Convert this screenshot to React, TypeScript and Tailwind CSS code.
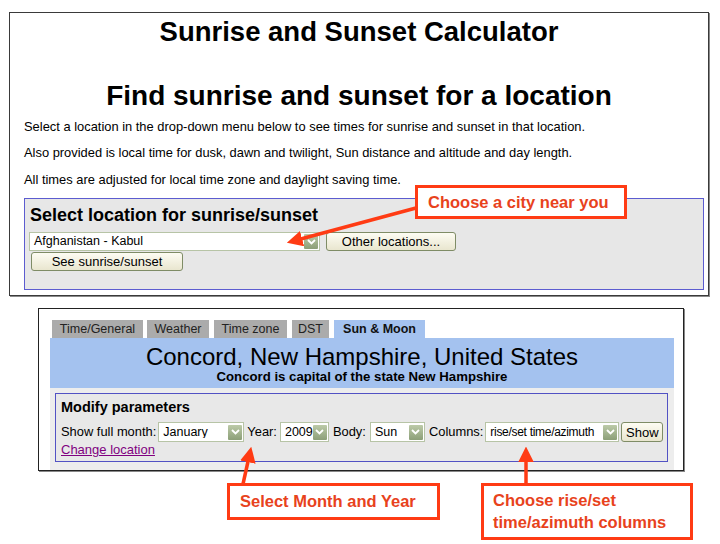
import React from "react";

const RED = "#ff3b14";

const Chevron = () => (
  <span className="flex h-[15px] w-[14px] shrink-0 items-center justify-center rounded-[1px] bg-linear-to-b from-[#bccaa8] to-[#8c9f78] mr-[1px]">
    <svg width="9" height="6" viewBox="0 0 9 6">
      <path d="M1 1 L4.5 4.5 L8 1" stroke="white" strokeWidth="1.8" fill="none" />
    </svg>
  </span>
);

const Select: React.FC<{ label: string; className: string; textClass?: string }> = ({
  label,
  className,
  textClass = "text-[12.5px]",
}) => (
  <div className={`flex items-center border border-[#b7c4a6] bg-white ${className}`}>
    <span className={`flex-1 overflow-hidden whitespace-nowrap pl-[4px] leading-none text-black ${textClass}`}>
      {label}
    </span>
    <Chevron />
  </div>
);

const Button: React.FC<{ label: string; className: string }> = ({ label, className }) => (
  <div
    className={`flex items-center justify-center rounded-[3px] border border-[#7f8c66] bg-linear-to-b from-[#fdfcf3] to-[#e9e6cf] text-[13px] leading-none text-black ${className}`}
  >
    {label}
  </div>
);

const Callout: React.FC<{ className: string; children: React.ReactNode }> = ({ className, children }) => (
  <div
    className={`absolute border-[3px] border-[#ff3b14] bg-white font-bold text-[#e8421c] text-[16.5px] ${className}`}
  >
    {children}
  </div>
);

const tabs = [
  { label: "Time/General", w: "w-[91px]", ml: "ml-[2px]" },
  { label: "Weather", w: "w-[62px]", ml: "ml-[4px]" },
  { label: "Time zone", w: "w-[73px]", ml: "ml-[5px]" },
  { label: "DST", w: "w-[37px]", ml: "ml-[5px]" },
];

export default function App() {
  return (
    <div className="relative h-[544px] w-[720px] overflow-hidden bg-white font-['Liberation_Sans',Arial,sans-serif] text-black">
      {/* top screenshot */}
      <div className="ml-[9px] mt-[12px] flex h-[284px] w-[700px] flex-col border border-[#3a3a3a] shadow-[1px_1px_0_#8a8a8a]">
        <h1 className="pt-[3px] text-center text-[27.5px] font-bold leading-[32px]">Sunrise and Sunset Calculator</h1>
        <h2 className="mt-[32px] text-center text-[28px] font-bold leading-[32px]">Find sunrise and sunset for a location</h2>
        <div className="pl-[14px] text-[12.9px] leading-[16px]">
          <p className="mt-[7px]">Select a location in the drop-down menu below to see times for sunrise and sunset in that location.</p>
          <p className="mt-[10px]">Also provided is local time for dusk, dawn and twilight, Sun distance and altitude and day length.</p>
          <p className="mt-[11px]">All times are adjusted for local time zone and daylight saving time.</p>
        </div>
        <div className="ml-[14px] mt-[10px] h-[92px] w-[680px] border border-[#5c5cd0] bg-[#e7e7e7] pl-[4px]">
          <div className="ml-[1px] pt-[6px] text-[18px] font-bold leading-[20px]">Select location for sunrise/sunset</div>
          <div className="mt-[7px] flex items-center">
            <Select label="Afghanistan - Kabul" className="h-[19px] w-[291px]" />
            <Button label="Other locations..." className="ml-[6px] h-[19px] w-[130px]" />
          </div>
          <Button label="See sunrise/sunset" className="ml-[2px] mt-[1px] h-[19px] w-[152px]" />
        </div>
      </div>

      {/* bottom screenshot */}
      <div className="ml-[38px] mt-[12px] h-[163px] w-[646px] border border-[#222] shadow-[1px_1px_0_#888]">
        <div className="ml-[11px] mt-[11px] w-[624px]">
          <div className="flex h-[18px] items-end">
            {tabs.map((t) => (
              <div
                key={t.label}
                className={`flex h-[18px] items-center justify-center bg-[#ababab] text-[12.5px] leading-none text-[#222] ${t.w} ${t.ml}`}
              >
                {t.label}
              </div>
            ))}
            <div className="ml-[5px] flex h-[18px] w-[91px] items-center justify-center bg-[#a4c2ef] text-[12.5px] font-bold leading-none text-[#111]">
              Sun &amp; Moon
            </div>
          </div>
          <div className="flex h-[50px] flex-col items-center bg-[#a4c2ef]">
            <div className="mt-[5px] text-[24px] leading-[27px]">Concord, New Hampshire, United States</div>
            <div className="text-[13.2px] font-bold leading-[14px]">Concord is capital of the state New Hampshire</div>
          </div>
          <div className="h-[82px] bg-[#ededed] pl-[5px] pt-[5px]">
            <div className="h-[69px] w-[613px] border border-[#5252c4] bg-[#e8e8e8] pl-[5px]">
              <div className="pt-[5px] text-[14.5px] font-bold leading-[16px]">Modify parameters</div>
              <div className="mt-[7px] flex items-center text-[12.9px] leading-none">
                <span>Show full month:</span>
                <Select label="January" className="ml-[2px] h-[20px] w-[86px]" />
                <span className="ml-[3px]">Year:</span>
                <Select label="2009" className="ml-[3px] h-[20px] w-[49px]" />
                <span className="ml-[4px]">Body:</span>
                <Select label="Sun" className="ml-[4px] h-[20px] w-[55px]" />
                <span className="ml-[4px]">Columns:</span>
                <Select
                  label="rise/set time/azimuth"
                  className="ml-[2px] h-[20px] w-[134px]"
                  textClass="text-[12px] tracking-[-0.3px]"
                />
                <Button label="Show" className="ml-[2px] h-[20px] w-[42px]" />
              </div>
              <a className="mt-[1px] block text-[13px] leading-[14px] text-[#800080] underline">Change location</a>
            </div>
          </div>
        </div>
      </div>

      {/* annotation arrows */}
      <svg className="absolute left-0 top-0" width="720" height="544" viewBox="0 0 720 544">
        <defs>
          <marker id="head" markerWidth="4.5" markerHeight="4.5" refX="1.5" refY="2.25" orient="auto">
            <path d="M0 0 L4.5 2.25 L0 4.5 Z" fill={RED} />
          </marker>
        </defs>
        <line x1="416" y1="208" x2="297" y2="240" stroke={RED} strokeWidth="3.5" markerEnd="url(#head)" />
        <line x1="243" y1="484" x2="249" y2="457" stroke={RED} strokeWidth="3.5" markerEnd="url(#head)" />
        <line x1="526" y1="484" x2="526" y2="457" stroke={RED} strokeWidth="3.5" markerEnd="url(#head)" />
      </svg>

      <Callout className="left-[415px] top-[185px] flex h-[34px] w-[212px] items-center pl-[10px] leading-none">
        Choose a city near you
      </Callout>
      <Callout className="left-[227px] top-[483px] flex h-[37px] w-[213px] items-center pl-[10px] leading-none">
        Select Month and Year
      </Callout>
      <Callout className="left-[481px] top-[483px] h-[57px] w-[212px] pl-[9px] pt-[3px] leading-[22px]">
        Choose rise/set
        <br />
        time/azimuth columns
      </Callout>
    </div>
  );
}
